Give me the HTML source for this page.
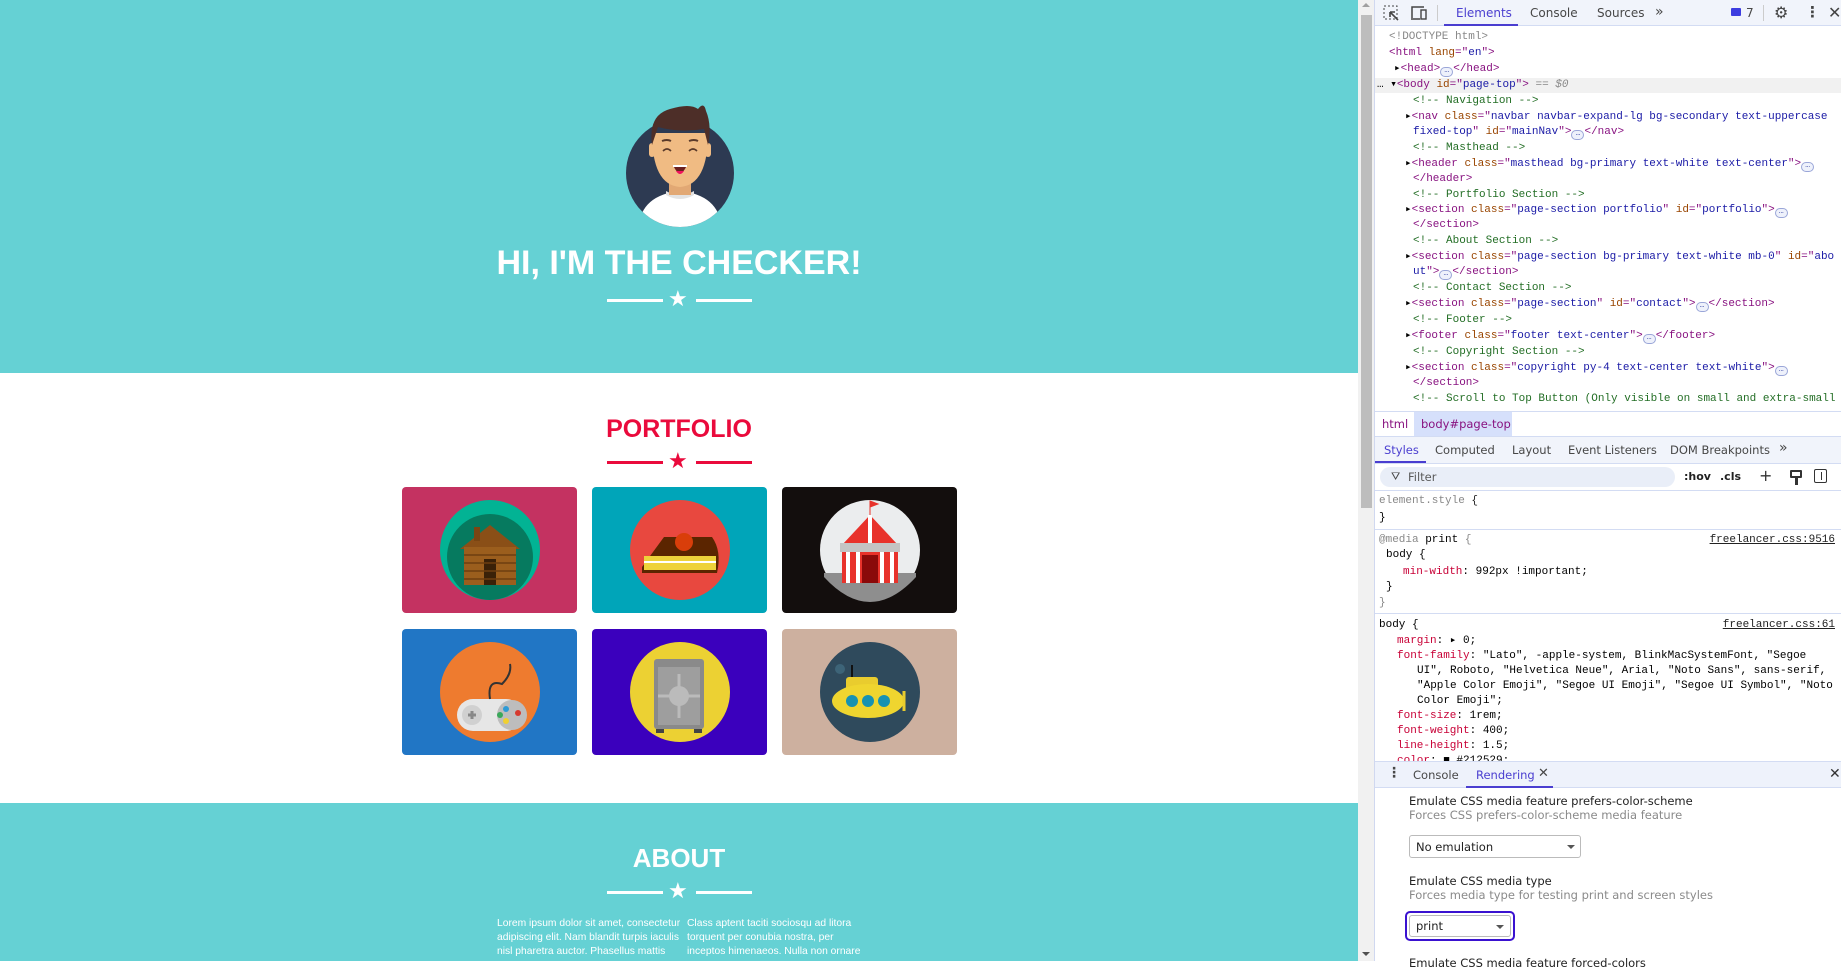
<!DOCTYPE html>
<html lang="en"><head><meta charset="utf-8">
<style>
*{box-sizing:border-box;margin:0;padding:0}
body{width:1841px;height:961px;overflow:hidden;position:relative;background:#fff;font-family:"Liberation Sans",sans-serif}
.abs{position:absolute}
.teal{background:#65d1d4}
h1,h2{font-family:"Liberation Sans",sans-serif;font-weight:700;position:absolute;left:0;width:1358px;text-align:center;text-transform:uppercase}
.div{position:absolute;height:3px}
.tile{position:absolute;width:175px;height:126px;border-radius:4px;overflow:hidden}
.mono{font-family:"Liberation Mono","DejaVu Sans Mono",monospace;font-size:11px;white-space:pre}
.dl{position:absolute;line-height:16px}
.t{color:#881280}.a{color:#994500}.v{color:#1a1aa6}.c{color:#236e25}.g{color:#888}
.ui{font-family:"DejaVu Sans","Liberation Sans",sans-serif;font-size:11.5px;color:#474747;position:absolute;white-space:nowrap}
.pn{color:#c80036}
.ell{display:inline-block;width:13px;height:10px;border:1px solid #9aa6d8;border-radius:5px;vertical-align:-1px;font-size:8px;line-height:6px;text-align:center;color:#3c4aa8;background:#eef1fb}
</style></head><body>

<div class="abs teal" style="left:0;top:0;width:1358px;height:373px"></div>
<svg class="abs" style="left:600px;top:95px" width="160" height="135" viewBox="0 0 160 135">
<defs><clipPath id="cc"><circle cx="80" cy="78" r="54"/></clipPath></defs>
<circle cx="80" cy="78" r="54" fill="#2d3a52"/>
<g clip-path="url(#cc)"><path d="M38 135 Q40 100 80 96 Q120 100 122 135Z" fill="#fff"/><path d="M66 96 Q80 104 94 96 L94 100 Q80 108 66 100Z" fill="#e3e3e3"/></g>
<rect x="69" y="80" width="22" height="20" fill="#e2a874"/>
<path d="M52 38 Q52 90 80 92 Q108 90 108 38 Z" fill="#f0bb83"/>
<rect x="49" y="48" width="6" height="14" rx="3" fill="#f0bb83"/><rect x="105" y="48" width="6" height="14" rx="3" fill="#f0bb83"/>
<path d="M52 50 Q48 20 70 14 Q90 8 98 14 Q104 6 106 16 Q112 30 108 50 L104 34 Q80 38 58 32 Z" fill="#4d2e28"/>
<path d="M63 56 q4 -4 8 0 M89 56 q4 -4 8 0" stroke="#5a3a2a" stroke-width="1.6" fill="none"/>
<path d="M62 46 q5 -2 9 0 M89 46 q5 -2 9 0" stroke="#5a3a2a" stroke-width="2" fill="none"/>
<path d="M73 70 Q80 86 87 70 Z" fill="#6b1f1f"/><path d="M73 70 h14 v2 h-14z" fill="#fff"/><path d="M76 76 Q80 82 84 76 Z" fill="#f0135e"/>
</svg>
<h1 style="top:244px;font-size:34px;color:#fff">HI, I'M THE CHECKER!</h1>
<div class="div" style="left:607px;top:299px;width:56px;background:#fff"></div>
<div class="div" style="left:696px;top:299px;width:56px;background:#fff"></div>
<div class="abs" style="left:668px;top:287px;font-size:22px;color:#fff;line-height:24px">★</div>

<h2 style="top:415px;font-size:25px;color:#ea0a3c">PORTFOLIO</h2>
<div class="div" style="left:607px;top:461px;width:56px;background:#ea0a3c"></div>
<div class="div" style="left:696px;top:461px;width:56px;background:#ea0a3c"></div>
<div class="abs" style="left:668px;top:449px;font-size:22px;color:#ea0a3c;line-height:24px">★</div>

<div class="tile" style="left:402px;top:487px;background:#c43261"><svg width="175" height="126"><circle cx="88" cy="63" r="50" fill="#02b394"/><circle cx="88" cy="70" r="43" fill="#067a5f"/><path d="M58 62 L88 38 L118 62Z" fill="#8a4f17"/><rect x="62" y="60" width="52" height="38" fill="#9b5e1d"/><rect x="82" y="72" width="12" height="26" fill="#3a2108"/><path d="M62 68h52M62 76h52M62 84h52M62 92h52" stroke="#6e3f10" stroke-width="1.5"/><rect x="72" y="40" width="6" height="14" fill="#7a4513"/></svg></div>
<div class="tile" style="left:592px;top:487px;background:#00a5b9"><svg width="175" height="126"><circle cx="88" cy="63" r="50" fill="#e8483f"/><path d="M50 80 L72 50 L120 50 Q130 64 125 86 L50 86Z" fill="#5b2500"/><rect x="52" y="69" width="72" height="14" fill="#eed23a"/><path d="M52 75h72" stroke="#fff" stroke-width="2"/><circle cx="92" cy="55" r="9" fill="#d93e0a"/></svg></div>
<div class="tile" style="left:782px;top:487px;background:#130e0d"><svg width="175" height="126"><circle cx="88" cy="63" r="50" fill="#ebedee"/><path d="M42 90 Q88 140 134 90 L134 86 H42Z" fill="#8e8e8e"/><path d="M60 58 L88 28 L116 58 L116 96 L60 96Z" fill="#e8322b"/><path d="M66 58v38M76 58v38M100 58v38M110 58v38M88 28v30" stroke="#fff" stroke-width="4"/><rect x="58" y="56" width="60" height="9" fill="#c4c4c4"/><rect x="80" y="68" width="16" height="28" fill="#8a0a0a"/><path d="M88 28V14 l8 3 -8 3" fill="#e8322b" stroke="#e8322b"/></svg></div>
<div class="tile" style="left:402px;top:629px;background:#2176c5"><svg width="175" height="126"><circle cx="88" cy="63" r="50" fill="#ee7b2f"/><rect x="55" y="70" width="65" height="32" rx="16" fill="#e6e6e6"/><circle cx="110" cy="86" r="15" fill="#bdbdbd"/><circle cx="70" cy="86" r="10" fill="#d0d0d0"/><path d="M66 86h8M70 82v8" stroke="#888" stroke-width="3"/><circle cx="104" cy="80" r="3" fill="#2e9bd6"/><circle cx="116" cy="84" r="3" fill="#d63a2e"/><circle cx="104" cy="92" r="3" fill="#f0d030"/><circle cx="98" cy="86" r="3" fill="#3aa85a"/><path d="M88 70 Q85 50 100 55 Q110 45 108 35" stroke="#333" stroke-width="2" fill="none"/></svg></div>
<div class="tile" style="left:592px;top:629px;background:#3b00bd"><svg width="175" height="126"><circle cx="88" cy="63" r="50" fill="#ecd133"/><rect x="62" y="30" width="50" height="70" rx="3" fill="#8a8a8a"/><rect x="66" y="38" width="42" height="58" fill="#9e9e9e"/><circle cx="87" cy="67" r="10" fill="#bbb"/><path d="M66 67h42M87 45v44" stroke="#bbb" stroke-width="3"/><rect x="64" y="100" width="8" height="4" fill="#444"/><rect x="102" y="100" width="8" height="4" fill="#444"/></svg></div>
<div class="tile" style="left:782px;top:629px;background:#cdb09f"><svg width="175" height="126"><circle cx="88" cy="63" r="50" fill="#2f4a5c"/><rect x="64" y="48" width="32" height="16" rx="3" fill="#e9cc2e"/><path d="M70 36 v12" stroke="#111" stroke-width="2"/><ellipse cx="86" cy="72" rx="36" ry="17" fill="#efd52f"/><circle cx="70" cy="72" r="6" fill="#1792b2"/><circle cx="86" cy="72" r="6" fill="#1792b2"/><circle cx="102" cy="72" r="6" fill="#1792b2"/><path d="M122 62v20" stroke="#e9cc2e" stroke-width="3"/><circle cx="58" cy="40" r="5" fill="#3d6478"/></svg></div>

<div class="abs teal" style="left:0;top:803px;width:1358px;height:158px"></div>
<h2 style="top:843px;font-size:26px;color:#fff">ABOUT</h2>
<div class="div" style="left:607px;top:891px;width:56px;background:#fff"></div>
<div class="div" style="left:696px;top:891px;width:56px;background:#fff"></div>
<div class="abs" style="left:668px;top:879px;font-size:22px;color:#fff;line-height:24px">★</div>
<div class="abs" style="left:497px;top:917px;width:190px;font-size:10.3px;line-height:14px;color:#fff">Lorem ipsum dolor sit amet, consectetur adipiscing elit. Nam blandit turpis iaculis nisl pharetra auctor. Phasellus mattis</div>
<div class="abs" style="left:687px;top:917px;width:175px;font-size:10.3px;line-height:14px;color:#fff">Class aptent taciti sociosqu ad litora torquent per conubia nostra, per inceptos himenaeos. Nulla non ornare</div>

<div class="abs" style="left:1358px;top:0;width:16px;height:961px;background:#f1f1f1"></div>
<div class="abs" style="left:1361px;top:15px;width:11px;height:493px;background:#bdbdbd"></div>
<div class="abs" style="left:1362px;top:3px;width:0;height:0;border:4px solid transparent;border-bottom-color:#a0a0a0;border-top:0"></div>
<div class="abs" style="left:1362px;top:952px;width:0;height:0;border:4px solid transparent;border-top-color:#505050;border-bottom:0"></div>

<div class="abs" style="left:1374px;top:0;width:467px;height:961px;background:#fff;border-left:1px solid #d0d8f0"></div>
<div class="abs" style="left:1375px;top:0;width:466px;height:26px;background:#f1f4fb;border-bottom:1px solid #d3dcf3"></div>
<svg class="abs" style="left:1383px;top:5px" width="18" height="16"><rect x="1" y="1" width="13" height="13" fill="none" stroke="#444" stroke-dasharray="2 2"/><path d="M7 7 L15 15 M7 7 h5 M7 7 v5" stroke="#444" stroke-width="1.6"/></svg>
<svg class="abs" style="left:1410px;top:5px" width="18" height="16"><path d="M2 13 V2 H14" stroke="#444" stroke-width="1.5" fill="none"/><path d="M1 14 H10" stroke="#444" stroke-width="1.5"/><rect x="11" y="5" width="5" height="9" fill="none" stroke="#444" stroke-width="1.4"/></svg>
<div class="abs" style="left:1437px;top:5px;width:1px;height:16px;background:#ccc"></div>
<div class="ui" style="left:1456px;top:6px;color:#4a3ed0;font-size:12px">Elements</div>
<div class="abs" style="left:1444px;top:24px;width:74px;height:2px;background:#4a3ed0"></div>
<div class="ui" style="left:1530px;top:6px;font-size:12px">Console</div>
<div class="ui" style="left:1597px;top:6px;font-size:12px">Sources</div>
<div class="ui" style="left:1655px;top:4px;font-size:14px">»</div>
<div class="abs" style="left:1731px;top:8px;width:10px;height:8px;background:#3d3de0;border-radius:1px"></div>
<div class="ui" style="left:1746px;top:6px;font-size:12px">7</div>
<div class="abs" style="left:1763px;top:5px;width:1px;height:16px;background:#ccc"></div>
<div class="ui" style="left:1774px;top:3px;font-size:16px;color:#444">⚙</div>
<div class="ui" style="left:1805px;top:3px;font-size:15px;color:#444;font-weight:bold">⋮</div>
<div class="ui" style="left:1828px;top:3px;font-size:16px;color:#444">✕</div>

<div class="abs" style="left:1375px;top:78px;width:466px;height:15px;background:#f1f1f1"></div>
<div class="mono">
<div class="dl g" style="left:1389px;top:29px">&lt;!DOCTYPE html&gt;</div>
<div class="dl" style="left:1389px;top:45px"><span class="t">&lt;html</span> <span class="a">lang</span><span class="t">="</span><span class="v">en</span><span class="t">"&gt;</span></div>
<div class="dl" style="left:1394px;top:61px">▸<span class="t">&lt;head&gt;</span><span class="ell">…</span><span class="t">&lt;/head&gt;</span></div>
<div class="dl" style="left:1377px;top:77px">… ▾<span class="t">&lt;body</span> <span class="a">id</span><span class="t">="</span><span class="v">page-top</span><span class="t">"&gt;</span> <span class="g"><i>== $0</i></span></div>
<div class="dl c" style="left:1413px;top:93px">&lt;!-- Navigation --&gt;</div>
<div class="dl" style="left:1405px;top:109px">▸<span class="t">&lt;nav</span> <span class="a">class</span><span class="t">="</span><span class="v">navbar navbar-expand-lg bg-secondary text-uppercase</span></div>
<div class="dl" style="left:1413px;top:124px"><span class="v">fixed-top</span><span class="t">"</span> <span class="a">id</span><span class="t">="</span><span class="v">mainNav</span><span class="t">"&gt;</span><span class="ell">…</span><span class="t">&lt;/nav&gt;</span></div>
<div class="dl c" style="left:1413px;top:140px">&lt;!-- Masthead --&gt;</div>
<div class="dl" style="left:1405px;top:156px">▸<span class="t">&lt;header</span> <span class="a">class</span><span class="t">="</span><span class="v">masthead bg-primary text-white text-center</span><span class="t">"&gt;</span><span class="ell">…</span></div>
<div class="dl t" style="left:1413px;top:171px">&lt;/header&gt;</div>
<div class="dl c" style="left:1413px;top:187px">&lt;!-- Portfolio Section --&gt;</div>
<div class="dl" style="left:1405px;top:202px">▸<span class="t">&lt;section</span> <span class="a">class</span><span class="t">="</span><span class="v">page-section portfolio</span><span class="t">"</span> <span class="a">id</span><span class="t">="</span><span class="v">portfolio</span><span class="t">"&gt;</span><span class="ell">…</span></div>
<div class="dl t" style="left:1413px;top:217px">&lt;/section&gt;</div>
<div class="dl c" style="left:1413px;top:233px">&lt;!-- About Section --&gt;</div>
<div class="dl" style="left:1405px;top:249px">▸<span class="t">&lt;section</span> <span class="a">class</span><span class="t">="</span><span class="v">page-section bg-primary text-white mb-0</span><span class="t">"</span> <span class="a">id</span><span class="t">="</span><span class="v">abo</span></div>
<div class="dl" style="left:1413px;top:264px"><span class="v">ut</span><span class="t">"&gt;</span><span class="ell">…</span><span class="t">&lt;/section&gt;</span></div>
<div class="dl c" style="left:1413px;top:280px">&lt;!-- Contact Section --&gt;</div>
<div class="dl" style="left:1405px;top:296px">▸<span class="t">&lt;section</span> <span class="a">class</span><span class="t">="</span><span class="v">page-section</span><span class="t">"</span> <span class="a">id</span><span class="t">="</span><span class="v">contact</span><span class="t">"&gt;</span><span class="ell">…</span><span class="t">&lt;/section&gt;</span></div>
<div class="dl c" style="left:1413px;top:312px">&lt;!-- Footer --&gt;</div>
<div class="dl" style="left:1405px;top:328px">▸<span class="t">&lt;footer</span> <span class="a">class</span><span class="t">="</span><span class="v">footer text-center</span><span class="t">"&gt;</span><span class="ell">…</span><span class="t">&lt;/footer&gt;</span></div>
<div class="dl c" style="left:1413px;top:344px">&lt;!-- Copyright Section --&gt;</div>
<div class="dl" style="left:1405px;top:360px">▸<span class="t">&lt;section</span> <span class="a">class</span><span class="t">="</span><span class="v">copyright py-4 text-center text-white</span><span class="t">"&gt;</span><span class="ell">…</span></div>
<div class="dl t" style="left:1413px;top:375px">&lt;/section&gt;</div>
<div class="dl c" style="left:1413px;top:391px">&lt;!-- Scroll to Top Button (Only visible on small and extra-small</div>
</div>

<div class="abs" style="left:1375px;top:411px;width:466px;height:25px;background:#fff;border-top:1px solid #d3dcf3"></div>
<div class="abs" style="left:1414px;top:412px;width:98px;height:24px;background:#d6e0fb"></div>
<div class="ui" style="left:1382px;top:417px;color:#881280">html</div>
<div class="ui" style="left:1421px;top:417px;color:#881280">body#page-top</div>
<div class="abs" style="left:1375px;top:436px;width:466px;height:28px;background:#f1f4fb;border-top:1px solid #d3dcf3;border-bottom:1px solid #d3dcf3"></div>
<div class="ui" style="left:1384px;top:443px;color:#4a3ed0">Styles</div>
<div class="abs" style="left:1375px;top:461px;width:51px;height:2px;background:#4a3ed0"></div>
<div class="ui" style="left:1435px;top:443px">Computed</div>
<div class="ui" style="left:1512px;top:443px">Layout</div>
<div class="ui" style="left:1568px;top:443px">Event Listeners</div>
<div class="ui" style="left:1670px;top:443px">DOM Breakpoints</div>
<div class="ui" style="left:1779px;top:440px;font-size:14px">»</div>
<div class="abs" style="left:1380px;top:467px;width:295px;height:20px;background:#e9eef8;border-radius:10px"></div>
<div class="ui" style="left:1391px;top:470px;font-size:11px">⛛</div>
<div class="ui" style="left:1408px;top:470px;color:#5a5a5a">Filter</div>
<div class="ui" style="left:1684px;top:470px;color:#222;font-weight:bold;font-size:11px">:hov</div>
<div class="ui" style="left:1720px;top:470px;color:#222;font-weight:bold;font-size:11px">.cls</div>
<div class="ui" style="left:1759px;top:466px;font-size:16px;color:#333">+</div>
<div class="abs" style="left:1790px;top:470px;width:12px;height:8px;border:2px solid #333;border-radius:1px"></div><div class="abs" style="left:1795px;top:478px;width:3px;height:7px;background:#333"></div>
<div class="abs" style="left:1814px;top:469px;width:13px;height:14px;border:1.5px solid #333;border-radius:2px"></div><div class="abs" style="left:1818px;top:472px;width:4px;height:8px;border-right:1.5px solid #333"></div>
<div class="abs" style="left:1375px;top:490px;width:466px;height:1px;background:#d3dcf3"></div>
<div class="mono" style="line-height:15px">
<div class="dl g" style="left:1379px;top:494px;line-height:15px">element.style <span style="color:#222">{</span></div>
<div class="dl" style="left:1379px;top:511px;line-height:15px">}</div>
<div class="abs" style="left:1375px;top:529px;width:466px;height:1px;background:#d3dcf3"></div>
<div class="dl" style="left:1379px;top:533px;line-height:15px"><span class="g">@media</span> print <span class="g">{</span></div>
<div class="dl" style="left:1700px;top:533px;width:135px;text-align:right;text-decoration:underline;color:#222;line-height:15px">freelancer.css:9516</div>
<div class="dl" style="left:1386px;top:548px;line-height:15px">body {</div>
<div class="dl" style="left:1403px;top:565px;line-height:15px"><span class="pn">min-width</span>: 992px !important;</div>
<div class="dl" style="left:1386px;top:580px;line-height:15px">}</div>
<div class="dl g" style="left:1379px;top:596px;line-height:15px">}</div>
<div class="abs" style="left:1375px;top:613px;width:466px;height:1px;background:#d3dcf3"></div>
<div class="dl" style="left:1379px;top:618px;line-height:15px">body {</div>
<div class="dl" style="left:1700px;top:618px;width:135px;text-align:right;text-decoration:underline;color:#222;line-height:15px">freelancer.css:61</div>
<div class="dl" style="left:1397px;top:634px;line-height:15px"><span class="pn">margin</span>: ▸ 0;</div>
<div class="dl" style="left:1397px;top:649px;line-height:15px"><span class="pn">font-family</span>: "Lato", -apple-system, BlinkMacSystemFont, "Segoe</div>
<div class="dl" style="left:1417px;top:664px;line-height:15px">UI", Roboto, "Helvetica Neue", Arial, "Noto Sans", sans-serif,</div>
<div class="dl" style="left:1417px;top:679px;line-height:15px">"Apple Color Emoji", "Segoe UI Emoji", "Segoe UI Symbol", "Noto</div>
<div class="dl" style="left:1417px;top:694px;line-height:15px">Color Emoji";</div>
<div class="dl" style="left:1397px;top:709px;line-height:15px"><span class="pn">font-size</span>: 1rem;</div>
<div class="dl" style="left:1397px;top:724px;line-height:15px"><span class="pn">font-weight</span>: 400;</div>
<div class="dl" style="left:1397px;top:739px;line-height:15px"><span class="pn">line-height</span>: 1.5;</div>
<div class="dl" style="left:1397px;top:754px;line-height:15px"><span class="pn">color</span>: ■ #212529;</div>
</div>
<div class="abs" style="left:1375px;top:761px;width:466px;height:200px;background:#fff;border-top:1px solid #d3dcf3"></div>
<div class="abs" style="left:1375px;top:762px;width:466px;height:26px;background:#eef2fb;border-bottom:1px solid #d3dcf3"></div>
<div class="ui" style="left:1387px;top:765px;font-size:14px;font-weight:bold">⋮</div>
<div class="ui" style="left:1413px;top:768px">Console</div>
<div class="ui" style="left:1476px;top:768px;color:#4a3ed0">Rendering</div>
<div class="ui" style="left:1538px;top:766px;font-size:13px">✕</div>
<div class="abs" style="left:1466px;top:786px;width:87px;height:2px;background:#4a3ed0"></div>
<div class="ui" style="left:1829px;top:766px;font-size:14px;color:#333">✕</div>
<div class="ui" style="left:1409px;top:794px;color:#222">Emulate CSS media feature prefers-color-scheme</div>
<div class="ui" style="left:1409px;top:808px;color:#8a8a8a">Forces CSS prefers-color-scheme media feature</div>
<div class="abs" style="left:1409px;top:835px;width:172px;height:23px;border:1px solid #bbb;border-radius:3px"></div>
<div class="ui" style="left:1416px;top:840px;color:#222">No emulation</div>
<div class="abs" style="left:1567px;top:845px;border:4px solid transparent;border-top:4px solid #555;border-bottom:0"></div>
<div class="ui" style="left:1409px;top:874px;color:#222">Emulate CSS media type</div>
<div class="ui" style="left:1409px;top:888px;color:#8a8a8a">Forces media type for testing print and screen styles</div>
<div class="abs" style="left:1405px;top:911px;width:110px;height:30px;border:2px solid #3a12d0;border-radius:5px"></div>
<div class="abs" style="left:1409px;top:915px;width:102px;height:22px;border:1px solid #bbb;border-radius:3px"></div>
<div class="ui" style="left:1416px;top:919px;color:#222">print</div>
<div class="abs" style="left:1496px;top:925px;border:4px solid transparent;border-top:4px solid #555;border-bottom:0"></div>
<div class="ui" style="left:1409px;top:956px;color:#222">Emulate CSS media feature forced-colors</div>
</body></html>
